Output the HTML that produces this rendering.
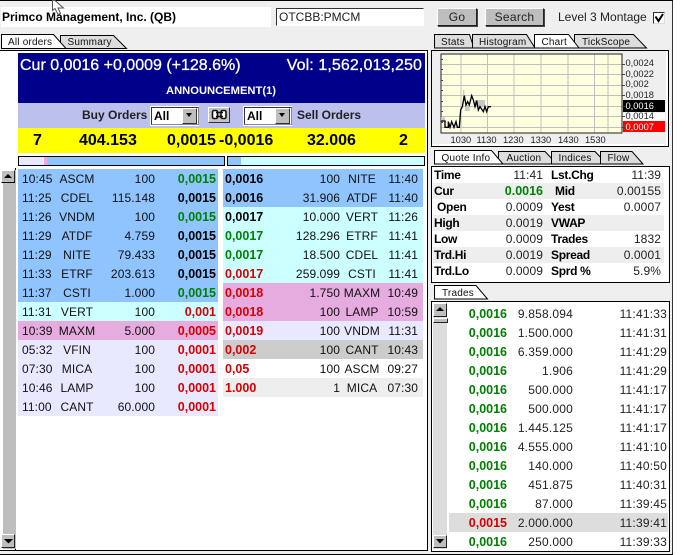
<!DOCTYPE html>
<html><head><meta charset="utf-8"><style>
html,body{margin:0;padding:0;width:684px;height:555px;overflow:hidden;background:#fff}
body{position:relative;font-family:"Liberation Sans",sans-serif;color:#000}
div,span{position:absolute;white-space:nowrap}
#bg{left:0;top:0;width:672px;height:555px;background:#efefef;border-right:1px solid #333}
svg{position:absolute;left:0;top:0}
.k{background:#000}
.btn{background:#bebebe;border:1px solid;border-color:#fff #222 #222 #fff;box-shadow:1px 1px 0 #444;text-align:center;font-size:12px;letter-spacing:.3px;color:#222;line-height:16px}
.r{height:19px;line-height:19px;font-size:12px;width:200px;letter-spacing:.1px;color:#111}
.r span{top:1px}
.sb{left:4px}.sy{left:34px;width:50px;text-align:center}.sz{right:63px}.pr{right:2px;font-weight:bold;font-size:12.5px;letter-spacing:0}
.pl{left:2px;font-weight:bold;font-size:12.5px;letter-spacing:0}.z2{right:83px}.s2{left:114px;width:50px;text-align:center}.t2{right:5px}
.g{color:#008000}.d{color:#d60000}.b{color:#000}
.bl{background:#8fc4ff}.cy{background:#ccffff}.pk{background:#e6abdf}.lv{background:#e8e8ff}
.q{height:16px;line-height:16px;font-size:12px;color:#222;left:433px;width:231px;letter-spacing:.1px}
.q b{position:absolute;font-size:12px;color:#000;letter-spacing:-.3px}
.q i{position:absolute;font-style:normal;}
.q .a{left:1px}.q .v1{right:121px}.q .c{left:118px}.q .v2{right:3px}
.tr{height:19px;line-height:19px;left:449px;width:219px;font-size:12px;letter-spacing:.2px;color:#222}
.tr span{top:1px}
.tr .p{position:absolute;right:161px;font-weight:bold;font-size:12.5px;letter-spacing:0;color:#008000}
.tr .s{right:95px}.tr .t{right:1px}
.y{font-size:16px;font-weight:bold;line-height:25px;top:128px}
.lab{font-size:9.3px;color:#222;left:625.5px;line-height:11px}
.xl{top:134px;font-size:9.3px;line-height:13px;color:#222}
</style></head><body>
<div id="bg"></div>
<div class="k" style="left:0;top:0;width:673px;height:1px"></div>
<div style="left:1px;top:7px;width:270px;height:20px;background:#fff;font-weight:bold;font-size:12px;line-height:20px;text-indent:1px">Primco Management, Inc. (QB)</div>
<div style="left:276px;top:8px;width:146px;height:16px;background:#fff;border:1px solid;border-color:#333 #fff #fff #333;font-size:12px;line-height:17px;text-indent:2px;color:#222">OTCBB:PMCM</div>
<div class="btn" style="left:437px;top:8px;width:38px;height:16px">Go</div>
<div class="btn" style="left:485px;top:8px;width:57px;height:16px">Search</div>
<div style="left:558px;top:9px;font-size:12px;line-height:16px;color:#222">Level 3 Montage</div>
<div style="left:653px;top:12px;width:10px;height:10px;background:#fff;border:1px solid #333;border-right-color:#ddd;border-bottom-color:#ddd"></div>

<!-- main panel -->
<div class="k" style="left:0;top:50px;width:428px;height:1px"></div>
<div style="left:0;top:51px;width:427px;height:499px;background:#fff"></div>
<div class="k" style="left:427px;top:50px;width:1px;height:501px"></div>
<div class="k" style="left:0;top:550px;width:428px;height:1px"></div>
<div class="k" style="left:0;top:554px;width:673px;height:1px"></div>

<div style="left:18px;top:53px;width:407px;height:50px;background:#00008b;color:#fff">
<span style="left:2px;top:3px;font-size:16px;line-height:20px;-webkit-text-stroke:.3px #fff">Cur 0,0016 +0,0009 (+128.6%)</span>
<span style="right:3px;top:3px;font-size:16px;line-height:20px;-webkit-text-stroke:.3px #fff;letter-spacing:.1px">Vol: 1,562,013,250</span>
<span style="left:148px;top:31px;font-size:11.2px;font-weight:bold;line-height:14px">ANNOUNCEMENT(1)</span>
</div>
<div style="left:18px;top:103px;width:407px;height:25px;background:#bcc0ec"></div>
<div style="left:82px;top:108px;font-size:12px;font-weight:bold;line-height:15px;color:#222">Buy Orders</div>
<div style="left:297px;top:108px;font-size:12px;font-weight:bold;line-height:15px;color:#222">Sell Orders</div>
<div style="left:150px;top:106px;width:49px;height:20px;background:#fff"></div>
<div style="left:151px;top:107px;width:46px;height:16px;border:1px solid #333;border-right-color:#888;border-bottom-color:#888;font-size:12px;font-weight:bold;line-height:16px;text-indent:2px">All</div>
<div style="left:182px;top:108px;width:13px;height:14px;background:#bebebe;border:1px solid;border-color:#fff #333 #333 #fff"></div>
<div style="left:243px;top:106px;width:49px;height:20px;background:#fff"></div>
<div style="left:244px;top:107px;width:46px;height:16px;border:1px solid #333;border-right-color:#888;border-bottom-color:#888;font-size:12px;font-weight:bold;line-height:16px;text-indent:2px">All</div>
<div style="left:275px;top:108px;width:13px;height:14px;background:#bebebe;border:1px solid;border-color:#fff #333 #333 #fff"></div>
<div style="left:208px;top:107px;width:20px;height:14px;background:#c4c4c4;border:1px solid;border-color:#fff #333 #333 #fff"></div>

<div style="left:18px;top:128px;width:407px;height:25px;background:#ffff00"></div>
<div class="y" style="left:33px">7</div><div class="y" style="left:79px">404.153</div><div class="y" style="left:167px">0,0015</div><div class="y" style="left:219px">-0,0016</div><div class="y" style="left:307px">32.006</div><div class="y" style="left:399px">2</div>

<div style="left:18px;top:156px;width:205px;height:8px;border:1px solid #000;background:#8fc4ff"></div>
<div style="left:19px;top:157px;width:25px;height:8px;background:#e8e8ff"></div>
<div style="left:44px;top:157px;width:3px;height:8px;background:#e6abdf"></div>
<div style="left:227px;top:156px;width:196px;height:8px;border:1px solid #000;background:#ccffff"></div>
<div style="left:228px;top:157px;width:13px;height:8px;background:#8fc4ff"></div>

<!-- left scroll -->
<div class="k" style="left:15px;top:168px;width:1px;height:382px"></div>
<div style="left:2px;top:170px;width:13px;height:379px;background:#bebebe;border-left:1px solid #fff"></div>
<div class="btn" style="left:1px;top:170px;width:12px;height:11px;box-shadow:none;border-bottom-color:#000"></div>
<div class="btn" style="left:1px;top:534px;width:12px;height:12px;box-shadow:none"></div>

<!-- buy rows -->
<div class="r bl" style="left:18px;top:169px"><span class="sb">10:45</span><span class="sy">ASCM</span><span class="sz">100</span><span class="pr g">0,0015</span></div>
<div class="r bl" style="left:18px;top:188px"><span class="sb">11:25</span><span class="sy">CDEL</span><span class="sz">115.148</span><span class="pr b">0,0015</span></div>
<div class="r bl" style="left:18px;top:207px"><span class="sb">11:26</span><span class="sy">VNDM</span><span class="sz">100</span><span class="pr g">0,0015</span></div>
<div class="r bl" style="left:18px;top:226px"><span class="sb">11:29</span><span class="sy">ATDF</span><span class="sz">4.759</span><span class="pr b">0,0015</span></div>
<div class="r bl" style="left:18px;top:245px"><span class="sb">11:29</span><span class="sy">NITE</span><span class="sz">79.433</span><span class="pr b">0,0015</span></div>
<div class="r bl" style="left:18px;top:264px"><span class="sb">11:33</span><span class="sy">ETRF</span><span class="sz">203.613</span><span class="pr b">0,0015</span></div>
<div class="r bl" style="left:18px;top:283px"><span class="sb">11:37</span><span class="sy">CSTI</span><span class="sz">1.000</span><span class="pr g">0,0015</span></div>
<div class="r cy" style="left:18px;top:302px"><span class="sb">11:31</span><span class="sy">VERT</span><span class="sz">100</span><span class="pr d">0,001</span></div>
<div class="r pk" style="left:18px;top:321px"><span class="sb">10:39</span><span class="sy">MAXM</span><span class="sz">5.000</span><span class="pr d">0,0005</span></div>
<div class="r lv" style="left:18px;top:340px"><span class="sb">05:32</span><span class="sy">VFIN</span><span class="sz">100</span><span class="pr d">0,0001</span></div>
<div class="r lv" style="left:18px;top:359px"><span class="sb">07:30</span><span class="sy">MICA</span><span class="sz">100</span><span class="pr d">0,0001</span></div>
<div class="r lv" style="left:18px;top:378px"><span class="sb">10:46</span><span class="sy">LAMP</span><span class="sz">100</span><span class="pr d">0,0001</span></div>
<div class="r lv" style="left:18px;top:397px"><span class="sb">11:00</span><span class="sy">CANT</span><span class="sz">60.000</span><span class="pr d">0,0001</span></div>

<!-- sell rows -->
<div class="r bl" style="left:223px;top:169px"><span class="pl b">0,0016</span><span class="z2">100</span><span class="s2">NITE</span><span class="t2">11:40</span></div>
<div class="r bl" style="left:223px;top:188px"><span class="pl b">0,0016</span><span class="z2">31.906</span><span class="s2">ATDF</span><span class="t2">11:40</span></div>
<div class="r cy" style="left:223px;top:207px"><span class="pl b">0,0017</span><span class="z2">10.000</span><span class="s2">VERT</span><span class="t2">11:26</span></div>
<div class="r cy" style="left:223px;top:226px"><span class="pl g">0,0017</span><span class="z2">128.296</span><span class="s2">ETRF</span><span class="t2">11:41</span></div>
<div class="r cy" style="left:223px;top:245px"><span class="pl g">0,0017</span><span class="z2">18.500</span><span class="s2">CDEL</span><span class="t2">11:41</span></div>
<div class="r cy" style="left:223px;top:264px"><span class="pl d">0,0017</span><span class="z2">259.099</span><span class="s2">CSTI</span><span class="t2">11:41</span></div>
<div class="r pk" style="left:223px;top:283px"><span class="pl d">0,0018</span><span class="z2">1.750</span><span class="s2">MAXM</span><span class="t2">10:49</span></div>
<div class="r pk" style="left:223px;top:302px"><span class="pl d">0,0018</span><span class="z2">100</span><span class="s2">LAMP</span><span class="t2">10:59</span></div>
<div class="r lv" style="left:223px;top:321px"><span class="pl d">0,0019</span><span class="z2">100</span><span class="s2">VNDM</span><span class="t2">11:31</span></div>
<div class="r" style="left:223px;top:340px;background:#ccc"><span class="pl d">0,002</span><span class="z2">100</span><span class="s2">CANT</span><span class="t2">10:43</span></div>
<div class="r" style="left:223px;top:359px;background:#fff"><span class="pl d">0,05</span><span class="z2">100</span><span class="s2">ASCM</span><span class="t2">09:27</span></div>
<div class="r" style="left:223px;top:378px;background:#eee"><span class="pl d">1.000</span><span class="z2">1</span><span class="s2">MICA</span><span class="t2">07:30</span></div>

<!-- chart panel -->
<div style="left:431px;top:50px;width:236px;height:95px;border:1px solid #000;background:#fff"></div>
<div style="left:432px;top:51px;width:234px;height:93px;background:#efefef"></div>
<div style="left:441px;top:54px;width:181px;height:79px;background:#ffffe0"></div>
<div class="k" style="left:623px;top:100px;width:42px;height:12px"></div>
<div style="left:623px;top:121px;width:42px;height:11px;background:#f00"></div>
<div style="left:622px;top:113px;width:43px;height:8px;background:#fff"></div>
<div class="lab" style="top:58px">0,0024</div>
<div class="lab" style="top:69px">0,0022</div>
<div class="lab" style="top:79px">0,002</div>
<div class="lab" style="top:90px">0,0018</div>
<div class="lab" style="top:101px;color:#fff">0,0016</div>
<div class="lab" style="top:111px">0,0014</div>
<div class="lab" style="top:122px;color:#fff">0,0007</div>
<div class="xl" style="left:450.5px">1030</div>
<div class="xl" style="left:476.5px">1130</div>
<div class="xl" style="left:503px">1230</div>
<div class="xl" style="left:530.5px">1330</div>
<div class="xl" style="left:558px">1430</div>
<div class="xl" style="left:585px">1530</div>

<!-- quote panel -->
<div style="left:431px;top:166px;width:237px;height:115px;border:1px solid #000;background:#fff"></div>
<div class="q" style="top:167px"><b class="a">Time</b><i class="v1">11:41</i><b class="c">Lst.Chg</b><i class="v2">11:39</i></div>
<div class="q" style="top:183px;background:#eee"><b class="a">Cur</b><b class="v1" style="color:#008000;right:121px;font-size:12.5px;letter-spacing:0">0.0016</b><b class="c" style="left:122px">Mid</b><i class="v2">0.00155</i></div>
<div class="q" style="top:199px"><b class="a" style="left:4px">Open</b><i class="v1">0.0009</i><b class="c">Yest</b><i class="v2">0.0007</i></div>
<div class="q" style="top:215px;background:#eee"><b class="a">High</b><i class="v1">0.0019</i><b class="c">VWAP</b></div>
<div class="q" style="top:231px"><b class="a">Low</b><i class="v1">0.0009</i><b class="c">Trades</b><i class="v2">1832</i></div>
<div class="q" style="top:247px;background:#eee"><b class="a">Trd.Hi</b><i class="v1">0.0019</i><b class="c">Spread</b><i class="v2">0.0001</i></div>
<div class="q" style="top:263px"><b class="a">Trd.Lo</b><i class="v1">0.0009</i><b class="c">Sprd %</b><i class="v2">5.9%</i></div>

<!-- trades panel -->
<div style="left:431px;top:301px;width:237px;height:249px;border:1px solid #000;background:#fff"></div>
<div style="left:433px;top:303px;width:14px;height:246px;background:#ddd"></div>
<div class="btn" style="left:433px;top:303px;width:12px;height:12px;box-shadow:none;border-bottom-color:#222"></div>
<div style="left:433px;top:318px;width:13px;height:3px;background:#bebebe;border:1px solid;border-color:#fff #222 #222 #fff"></div>
<div class="btn" style="left:433px;top:535px;width:12px;height:11px;box-shadow:none"></div>
<div class="tr" style="top:304px"><span class="p">0,0016</span><span class="s">9.858.094</span><span class="t">11:41:33</span></div>
<div class="tr" style="top:323px"><span class="p">0,0016</span><span class="s">1.500.000</span><span class="t">11:41:31</span></div>
<div class="tr" style="top:342px"><span class="p">0,0016</span><span class="s">6.359.000</span><span class="t">11:41:29</span></div>
<div class="tr" style="top:361px"><span class="p">0,0016</span><span class="s">1.906</span><span class="t">11:41:29</span></div>
<div class="tr" style="top:380px"><span class="p">0,0016</span><span class="s">500.000</span><span class="t">11:41:17</span></div>
<div class="tr" style="top:399px"><span class="p">0,0016</span><span class="s">500.000</span><span class="t">11:41:17</span></div>
<div class="tr" style="top:418px"><span class="p">0,0016</span><span class="s">1.445.125</span><span class="t">11:41:17</span></div>
<div class="tr" style="top:437px"><span class="p">0,0016</span><span class="s">4.555.000</span><span class="t">11:41:10</span></div>
<div class="tr" style="top:456px"><span class="p">0,0016</span><span class="s">140.000</span><span class="t">11:40:50</span></div>
<div class="tr" style="top:475px"><span class="p">0,0016</span><span class="s">451.875</span><span class="t">11:40:31</span></div>
<div class="tr" style="top:494px"><span class="p">0,0016</span><span class="s">87.000</span><span class="t">11:39:45</span></div>
<div class="tr" style="top:513px;background:#ddd"><span class="p" style="color:#d60000">0,0015</span><span class="s">2.000.000</span><span class="t">11:39:41</span></div>
<div class="tr" style="top:532px"><span class="p">0,0016</span><span class="s">250.000</span><span class="t">11:39:33</span></div>

<svg width="684" height="555" viewBox="0 0 684 555">
<!-- tabs -->
<g stroke="#000" stroke-width="1" fill="#ddd">
<path d="M60.5 48.5V35.5H113.5L126.5 48.5Z"/>
<path d="M1.5 48.5V34.5H53.5L66 48.5Z" fill="#fff"/>
<path d="M434.5 48V34.5H469.5L474 48Z"/>
<path d="M472.5 48V34.5H526.5L535 48Z"/>
<path d="M574.5 48V34.5H633.5L646.5 48Z"/>
<path d="M534.5 48V34.5H568.5L579 48Z" fill="#fff"/>
<path d="M499.5 164V151.5H546L558 164Z" transform="translate(-1 0)"/>
<path d="M551.5 164V151.5H595L607 164Z"/>
<path d="M600.5 164V151.5H632L643 164Z"/>
<path d="M434.5 164V150.5H491.5L503 164Z" fill="#fff"/>
<path d="M434.5 299V285.5H476L487.5 299Z" fill="#fff"/>
</g>
<!-- chart grid -->
<g stroke="#c0c0c0" stroke-width="1" fill="none">
<path d="M461 54V133M487.5 54V133M514 54V133M541 54V133M568 54V133M594.500 54V133M608 54V133"/>
<path d="M441 64.500H622M441 74.500H622M441 85.500H622M441 95.500H622M441 106.500H622M441 116.500H622M441 127.500H622"/>
</g>
<rect x="441" y="54" width="181" height="79" fill="none" stroke="#222" stroke-width="1"/>
<g stroke="#444" stroke-width="1"><path d="M441 59.500h2M441 69.500h2M441 80.500h2M441 90.500h2M441 101.500h2M441 111.500h2M441 122.500h2M622 64.500h3M622 74.500h3M622 85.500h3M622 95.500h3M622 106.500h3M622 116.500h3M622 127.500h3"/></g>
<g transform="translate(430 30) scale(.3333)">
<g fill="#c8c8c8"><rect x="99" y="180" width="4" height="25"/><rect x="105" y="225" width="14" height="18"/><rect x="135" y="210" width="30" height="18"/><rect x="33" y="262" width="12" height="11"/></g>
<path d="M32 273H45V292H55V275L60 292L65 275L72 292L78 275L82 292H88L92 240L97 230L103 197L108 225L113 215L118 225L125 197L130 210L135 230L140 212L145 240L150 230L160 245L165 230L170 245L175 230H183" stroke="#000" stroke-width="4" fill="none"/>
</g>
<!-- arrows -->
<g fill="#000">
<path d="M4 178L8 174L12 178Z"/><path d="M4 539H13L8.500 543.500Z"/>
<path d="M436 311L440 307L444 311Z"/><path d="M436 539H444L440 543.500Z"/>
<path d="M186 113H192L189 117Z"/><path d="M279 113H285L282 117Z"/>
</g>
<!-- check -->
<path d="M655.500 16.500L658.500 21L663 14" stroke="#000" stroke-width="2" fill="none"/>
<!-- link -->
<g fill="#fff" stroke="#111" stroke-width="1.6"><rect x="212.500" y="110.500" width="5" height="8" rx="1.500"/><rect x="221" y="110.500" width="5" height="8" rx="1.500"/><path d="M216 112.500h7M216 116.500h7" fill="none"/></g>
<!-- cursor -->
<path d="M52.500 .5V10.500L55 8.500L58 14.500L60.500 13.500L58 8H63.500L55 .5Z" fill="#fff" stroke="#555" stroke-width="1"/>
<g style="font-family:'Liberation Sans',sans-serif;font-size:10px;letter-spacing:.2px" fill="#111">
<text x="8" y="45">All orders</text><text x="67.500" y="45">Summary</text>
<text x="441" y="45">Stats</text><text x="479" y="45">Histogram</text><text x="541.500" y="45">Chart</text><text x="582" y="45">TickScope</text>
<text x="441.500" y="161">Quote Info</text><text x="506.500" y="161">Auction</text><text x="558.500" y="161">Indices</text><text x="607.500" y="161">Flow</text>
<text x="442" y="296">Trades</text>
</g>
</svg>
</body></html>
